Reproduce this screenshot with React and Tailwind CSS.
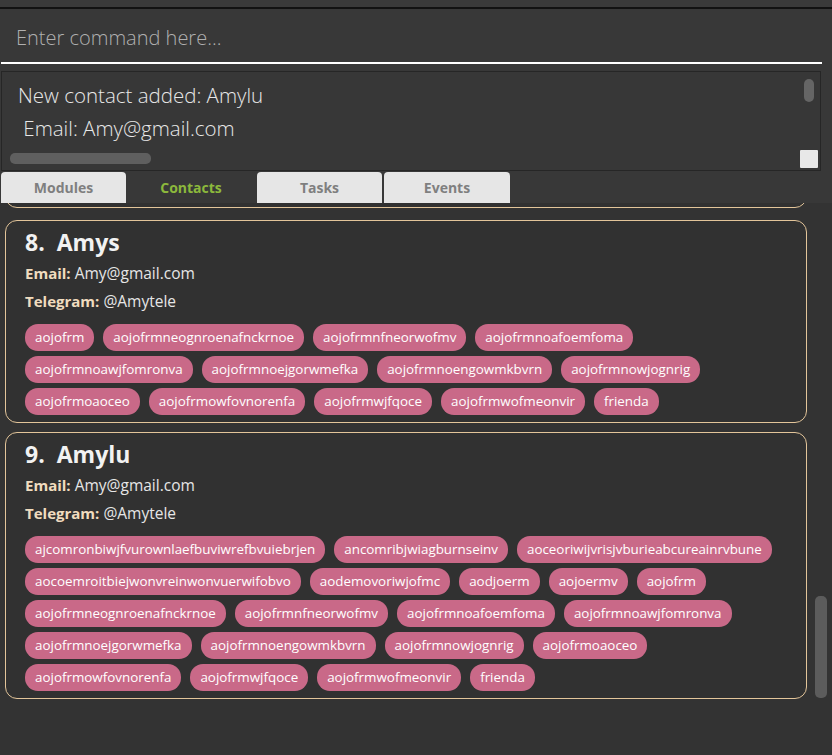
const card8Tags = [
  'aojofrm', 'aojofrmneognroenafnckrnoe', 'aojofrmnfneorwofmv', 'aojofrmnoafoemfoma',
  'aojofrmnoawjfomronva', 'aojofrmnoejgorwmefka', 'aojofrmnoengowmkbvrn', 'aojofrmnowjognrig',
  'aojofrmoaoceo', 'aojofrmowfovnorenfa', 'aojofrmwjfqoce', 'aojofrmwofmeonvir', 'frienda',
]

const card9Tags = [
  'ajcomronbiwjfvurownlaefbuviwrefbvuiebrjen', 'ancomribjwiagburnseinv', 'aoceoriwijvrisjvburieabcureainrvbune',
  'aocoemroitbiejwonvreinwonvuerwifobvo', 'aodemovoriwjofmc', 'aodjoerm', 'aojoermv', 'aojofrm',
  'aojofrmneognroenafnckrnoe', 'aojofrmnfneorwofmv', 'aojofrmnoafoemfoma', 'aojofrmnoawjfomronva',
  'aojofrmnoejgorwmefka', 'aojofrmnoengowmkbvrn', 'aojofrmnowjognrig', 'aojofrmoaoceo',
  'aojofrmowfovnorenfa', 'aojofrmwjfqoce', 'aojofrmwofmeonvir', 'frienda',
]

const tabs = [
  { name: 'Modules', cls: 'w-[125px]' },
  { name: 'Contacts', cls: 'w-[130px]' },
  { name: 'Tasks', cls: 'w-[125px] ml-[1px]' },
  { name: 'Events', cls: 'w-[126px] ml-[2px]' },
]

function ContactCard({ index, name, email, telegram, tags }) {
  return (
    <div className="border-[1.5px] border-[#e3c59a] rounded-[12px] bg-[#313131] pl-[19px] pr-[18px] pt-[6px] pb-[7px]">
      <div className="text-[23px] font-bold text-[#f2f2f2] leading-[30px]">
        {index}.&nbsp;&nbsp;{name}
      </div>
      <div className="text-[15.5px] text-[#e6e6e6] leading-[20px] mt-[6px]">
        <span className="font-bold text-[#f0dcbf] text-[15px]">Email:</span> {email}
      </div>
      <div className="text-[15.5px] text-[#e6e6e6] leading-[20px] mt-[8px]">
        <span className="font-bold text-[#f0dcbf] text-[15px]">Telegram:</span> {telegram}
      </div>
      <div className="flex flex-wrap gap-x-[9px] gap-y-[5px] mt-[13px]">
        {tags.map((t, i) => (
          <span key={i} className="h-[27px] leading-[27px] px-[10px] rounded-[13px] bg-[#c96988] text-white text-[13.4px]">
            {t}
          </span>
        ))}
      </div>
    </div>
  )
}

export default function App() {
  return (
    <div className="w-[832px] h-[755px] overflow-hidden bg-[#383838] flex flex-col" style={{ fontFamily: '"Open Sans", "Noto Sans", sans-serif' }}>
      {/* Top strip */}
      <div className="h-[7px] bg-[#3a3a3a]" />
      <div className="h-[2px] bg-[#121212]" />

      {/* Command box */}
      <div className="h-[53px] pl-[16px] pt-[15px] pr-[10px]">
        <div className="text-[20px] font-light text-[#b0b0b0] leading-[28px]">Enter command here...</div>
      </div>
      <div className="h-[2px] ml-[1px] w-[821px] bg-white" />

      {/* Result display */}
      <div className="mt-[7px] ml-[1px] w-[820px] h-[100px] border border-[#262626] bg-[#373737] relative">
        <div className="pl-[16px] pt-[7px] text-[20.5px] font-light text-[#e8e8e8] leading-[33px] whitespace-pre">
          {'New contact added: Amylu\n Email: Amy@gmail.com'}
        </div>
        <div className="absolute right-[6px] top-[7px] w-[10px] h-[23px] rounded-[5px] bg-[#656565]" />
        <div className="absolute left-[8px] top-[81px] w-[141px] h-[11px] rounded-[5px] bg-[#5f5f5f]" />
        <div className="absolute right-[2px] bottom-[2px] w-[18px] h-[18px] bg-[#e8e8e8] rounded-[1px]" />
      </div>

      {/* Tabs */}
      <div className="flex mt-[1px] ml-[1px] h-[31px]">
        {tabs.map((t) => (
          <div
            key={t.name}
            className={`${t.cls} rounded-t-[4px] flex items-center justify-center text-[14px] font-bold ${
              t.name === 'Contacts' ? 'text-[#8cb83c] bg-[#383838]' : 'text-[#7f7f7f] bg-[#e6e6e6]'
            }`}
          >
            {t.name}
          </div>
        ))}
      </div>

      {/* Contact list */}
      <div className="flex-1 flex min-h-0 relative bg-[#333333]">
        <div className="flex-1 min-h-0 overflow-hidden pl-[5px] pr-[8px]">
          <div className="-mt-[20px] h-[25px] border-[1.5px] border-[#e3c59a] rounded-[12px] bg-[#313131]" />
          <div className="mt-[12px] flex flex-col gap-[9px]">
            <ContactCard index={8} name="Amys" email="Amy@gmail.com" telegram="@Amytele" tags={card8Tags} />
            <ContactCard index={9} name="Amylu" email="Amy@gmail.com" telegram="@Amytele" tags={card9Tags} />
          </div>
        </div>
        <div className="w-[17px] pr-[3px] pt-[393px] pb-[57px]">
          <div className="w-[12px] h-full rounded-[5px] bg-[#5c5c5c]" />
        </div>
      </div>
    </div>
  )
}
